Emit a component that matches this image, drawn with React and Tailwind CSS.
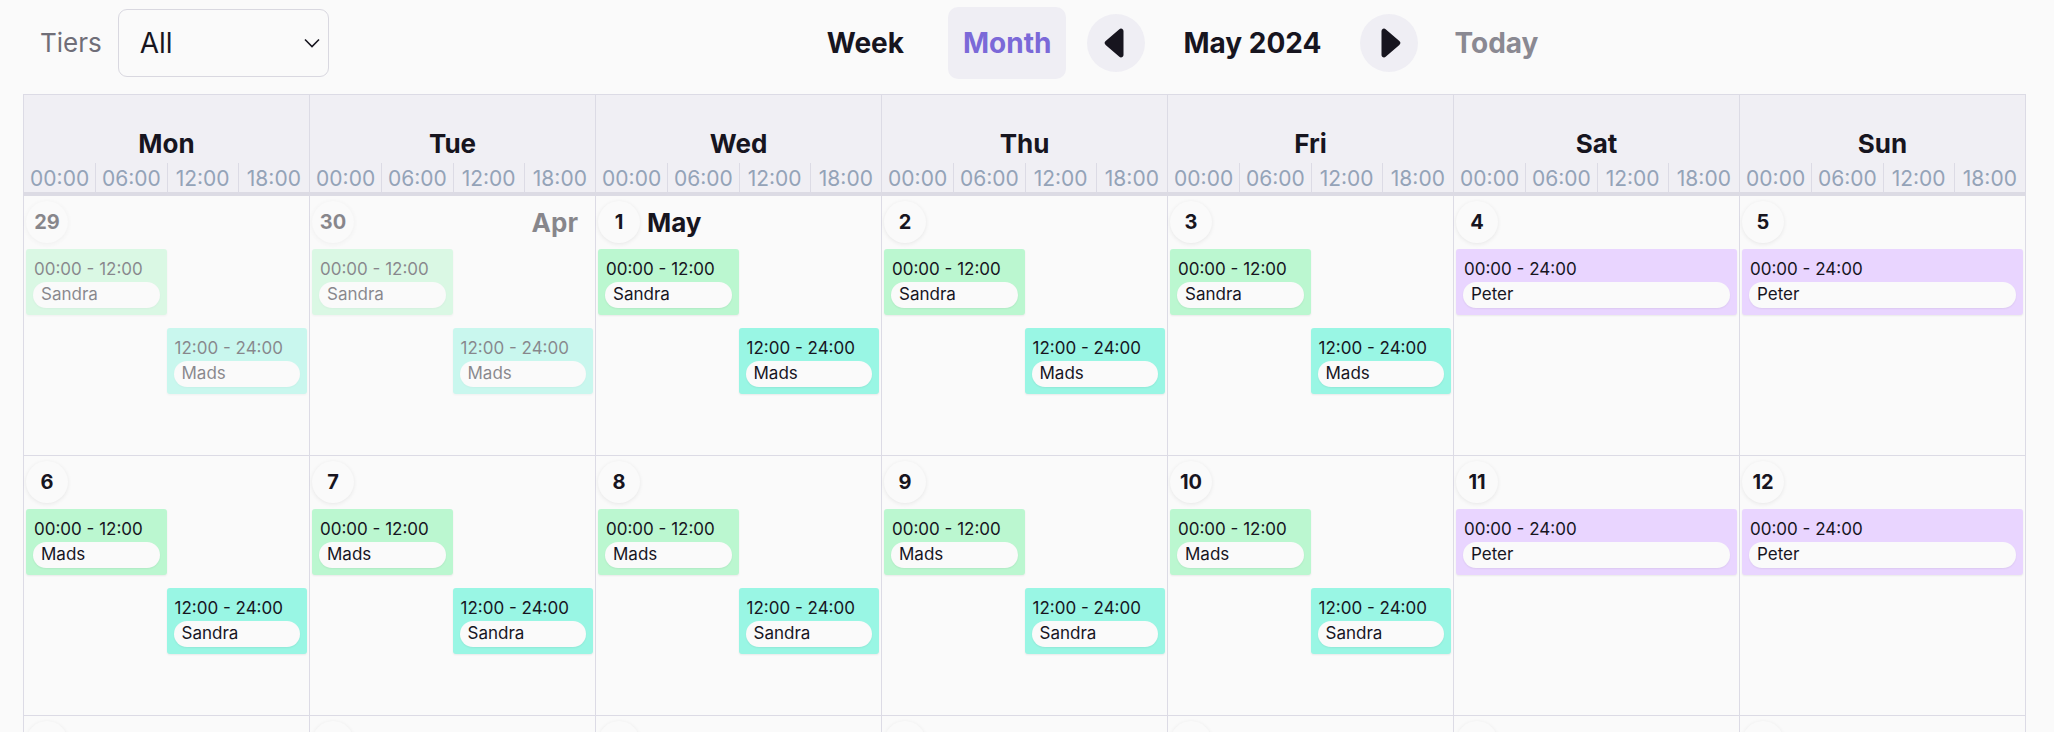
import React from 'react';

const dayNames = ['Mon', 'Tue', 'Wed', 'Thu', 'Fri', 'Sat', 'Sun'];
const hourLabels = ['00:00', '06:00', '12:00', '18:00'];

const slotColors = {
  morning: 'bg-[#bbf7d0]',
  evening: 'bg-[#99f6e4]',
  allday: 'bg-[#e9d5ff]',
};

// Byg de synlige uger fra man. 29. april
const buildWeeks = (count) => {
  const days = [
    { day: 29, month: 'Apr', faded: true },
    { day: 30, month: 'Apr', faded: true, monthEnd: true },
  ];
  for (let d = 1; d <= 31; d++) days.push({ day: d, month: 'May', monthStart: d === 1 });

  const weeks = [];
  for (let w = 0; w < count; w++) {
    weeks.push(
      days.slice(w * 7, w * 7 + 7).map((d, i) => {
        let shifts;
        if (i >= 5) {
          shifts = [[{ start: 0, end: 24, name: 'Peter', slot: 'allday' }], []];
        } else {
          const first = w % 2 === 0 ? 'Sandra' : 'Mads';
          const second = w % 2 === 0 ? 'Mads' : 'Sandra';
          shifts = [
            [{ start: 0, end: 12, name: first, slot: 'morning' }],
            [{ start: 12, end: 24, name: second, slot: 'evening' }],
          ];
        }
        return { ...d, shifts };
      })
    );
  }
  return weeks;
};

const pad = (h) => `${String(h).padStart(2, '0')}:00`;

const CaretLeft = () => (
  <svg width="40" height="40" viewBox="0 0 16 16" fill="#17151f">
    <path d="m3.86 8.753 5.482 4.796c.646.566 1.658.106 1.658-.753V3.204a1 1 0 0 0-1.659-.753l-5.48 4.796a1 1 0 0 0 0 1.506z" />
  </svg>
);

const CaretRight = () => (
  <svg width="40" height="40" viewBox="0 0 16 16" fill="#17151f">
    <path d="m12.14 8.753-5.482 4.796c-.646.566-1.658.106-1.658-.753V3.204a1 1 0 0 1 1.659-.753l5.48 4.796a1 1 0 0 1 0 1.506z" />
  </svg>
);

const Shift = ({ shift }) => (
  <div
    className={`rounded-[3px] ${slotColors[shift.slot]} px-[7px] pb-[7px] pt-[8px] shadow-[0_1px_2px_rgba(0,0,0,0.07)]`}
    style={{ marginLeft: `${(shift.start / 24) * 100}%`, width: `${((shift.end - shift.start) / 24) * 100}%` }}
  >
    <div className="h-[24px] whitespace-nowrap pl-[1px] text-[17px] leading-[24px]">
      {pad(shift.start)} - {pad(shift.end)}
    </div>
    <div className="mt-[1px] flex h-[26px] items-center rounded-full bg-[#fafafa] px-[8px] text-[17px] shadow-[0_1px_2px_rgba(0,0,0,0.06)]">
      {shift.name}
    </div>
  </div>
);

const DayCell = ({ d }) => (
  <div className="h-[259px] border-l border-[#dcdbe5] px-[2px] pt-[5px]">
    <div className={`flex h-[42px] items-center ${d.faded ? 'opacity-50' : ''}`}>
      <div className="flex h-[42px] w-[42px] items-center justify-center rounded-full bg-[#fafafa] text-[20px] font-bold shadow-[0_1px_4px_rgba(0,0,0,0.08)]">
        {d.day}
      </div>
      {d.monthStart && <span className="ml-[7px] text-[26px] font-bold">{d.month}</span>}
      {d.monthEnd && <span className="ml-auto pr-[15px] text-[26px] font-bold">{d.month}</span>}
    </div>
    <div className={`mt-[6px] flex flex-col gap-[13px] ${d.faded ? 'opacity-50' : ''}`}>
      {d.shifts.map((lane, li) => (
        <div key={li} className="flex h-[66px]">
          {lane.map((s, si) => (
            <Shift key={si} shift={s} />
          ))}
        </div>
      ))}
    </div>
  </div>
);

const App = () => {
  const weeks = buildWeeks(3);

  return (
    <div className="h-[732px] overflow-hidden bg-[#fafafa] font-[Inter,sans-serif] text-[#17151f]">
      {/* Værktøjslinje */}
      <div className="flex h-[85px] items-center pl-[40px]">
        <span className="text-[26px] text-[#6f6e78]">Tiers</span>
        <div className="ml-[16px] flex h-[68px] w-[211px] items-center justify-between rounded-[9px] border border-[#d9d8e0] bg-[#fafafa] pl-[21px] pr-[8px]">
          <span className="text-[28px]">All</span>
          <svg width="16" height="10" viewBox="0 0 16 10" fill="none">
            <polyline points="1,1.5 8,8.5 15,1.5" stroke="#17151f" strokeWidth="1.6" />
          </svg>
        </div>

        <div className="ml-[483px] flex items-center">
          <button className="px-[15px] text-[28px] font-bold">Week</button>
          <button className="ml-[29px] h-[72px] rounded-[10px] bg-[#efeef4] px-[15px] text-[28px] font-bold text-[#7b69d8]">
            Month
          </button>
          <button className="ml-[21px] flex h-[58px] w-[58px] items-center justify-center rounded-full bg-[#efeef4]">
            <CaretLeft />
          </button>
          <span className="ml-[38px] text-[28px] font-bold">May 2024</span>
          <button className="ml-[39px] flex h-[58px] w-[58px] items-center justify-center rounded-full bg-[#efeef4]">
            <CaretRight />
          </button>
          <button className="ml-[36px] text-[28px] font-bold text-[#8a8992]">Today</button>
        </div>
      </div>

      {/* Kalender */}
      <div className="ml-[23px] mt-[9px] w-[2003px] border-r border-t border-[#dcdbe5]">
        <div className="grid grid-cols-7 border-b-4 border-[#dcdbe4] bg-[#f0eff4]">
          {dayNames.map((name) => (
            <div key={name} className="border-l border-[#dcdbe5] pt-[33px]">
              <div className="h-[32px] text-center text-[26px] font-bold leading-[32px]">{name}</div>
              <div className="mt-[3px] grid h-[29px] grid-cols-4">
                {hourLabels.map((h, i) => (
                  <div
                    key={h}
                    className={`flex items-center justify-center text-[21px] text-[#94a3b8] ${i > 0 ? 'border-l border-[#dcdbe5]' : ''}`}
                  >
                    {h}
                  </div>
                ))}
              </div>
            </div>
          ))}
        </div>

        {weeks.map((week, wi) => (
          <div key={wi} className="grid grid-cols-7 border-b border-[#dcdbe5]">
            {week.map((d, di) => (
              <DayCell key={di} d={d} />
            ))}
          </div>
        ))}
      </div>
    </div>
  );
};

export default App;
